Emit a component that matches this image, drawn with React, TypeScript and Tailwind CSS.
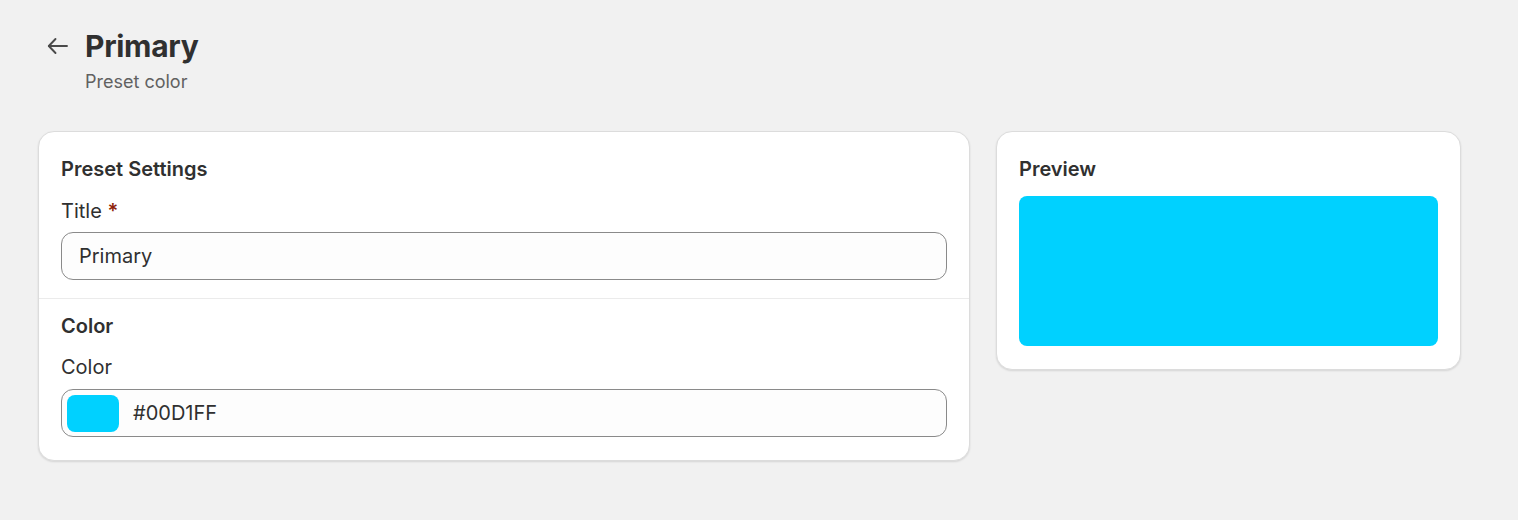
import React from 'react';

const swatch = '#00D1FF';

const Card = ({ className = '', children }: { className?: string; children: React.ReactNode }) => (
    <div
        className={`rounded-2xl border border-[#dcdcdc] bg-white shadow-[0_1px_2px_rgba(0,0,0,0.12)] ${className}`}
    >
        {children}
    </div>
);

const BackArrow = () => (
    <svg width="22" height="22" viewBox="0 0 22 22" fill="none" stroke="currentColor" strokeWidth="1.9" strokeLinecap="round" strokeLinejoin="round">
        <path d="M2 11H20" />
        <path d="M8.5 4L1.8 11L8.5 18" />
    </svg>
);

const App = () => {
    return (
        <div className="min-h-[520px] w-full bg-[#f1f1f1] pl-[38px] pt-[28px] font-['Inter',sans-serif] text-[#303030]">
            <div className="flex items-start gap-[16px] pl-[9px]">
                <button className="mt-[7px] flex h-[22px] w-[22px] items-center justify-center text-[#4a4a4a]">
                    <BackArrow />
                </button>
                <div className="flex flex-col gap-[6px]">
                    <h1 className="text-[30px] font-bold leading-[36px] tracking-[-0.01em]">Primary</h1>
                    <p className="text-[18px] leading-[24px] text-[#616161]">Preset color</p>
                </div>
            </div>

            <div className="mt-[37px] flex items-start gap-[26px]">
                <Card className="w-[932px] overflow-hidden">
                    <div className="px-[22px] pb-[18px] pt-[23px]">
                        <h2 className="text-[20px] font-semibold leading-[28px]">Preset Settings</h2>
                        <label className="mt-[14px] block text-[20px] leading-[28px]">
                            Title <span className="font-semibold text-[#8e1f0b]">*</span>
                        </label>
                        <div className="mt-[7px] flex h-[48px] items-center rounded-xl border border-[#8a8a8a] bg-[#fdfdfd] px-[17px] text-[20px]">
                            Primary
                        </div>
                    </div>
                    <div className="border-t border-[#ebebeb] px-[22px] pb-[23px] pt-[13px]">
                        <h2 className="text-[20px] font-semibold leading-[28px]">Color</h2>
                        <label className="mt-[13px] block text-[20px] leading-[28px]">Color</label>
                        <div className="mt-[8px] flex h-[48px] items-center gap-[14px] rounded-xl border border-[#8a8a8a] bg-[#fdfdfd] pl-[5px] text-[20px]">
                            <div className="h-[37px] w-[52px] rounded-lg" style={{ backgroundColor: swatch }} />
                            <span>#00D1FF</span>
                        </div>
                    </div>
                </Card>

                <Card className="w-[465px] px-[22px] pb-[23px] pt-[23px]">
                    <h2 className="text-[20px] font-semibold leading-[28px]">Preview</h2>
                    <div className="mt-[13px] h-[150px] w-full rounded-lg" style={{ backgroundColor: swatch }} />
                </Card>
            </div>
        </div>
    );
};

export default App;
